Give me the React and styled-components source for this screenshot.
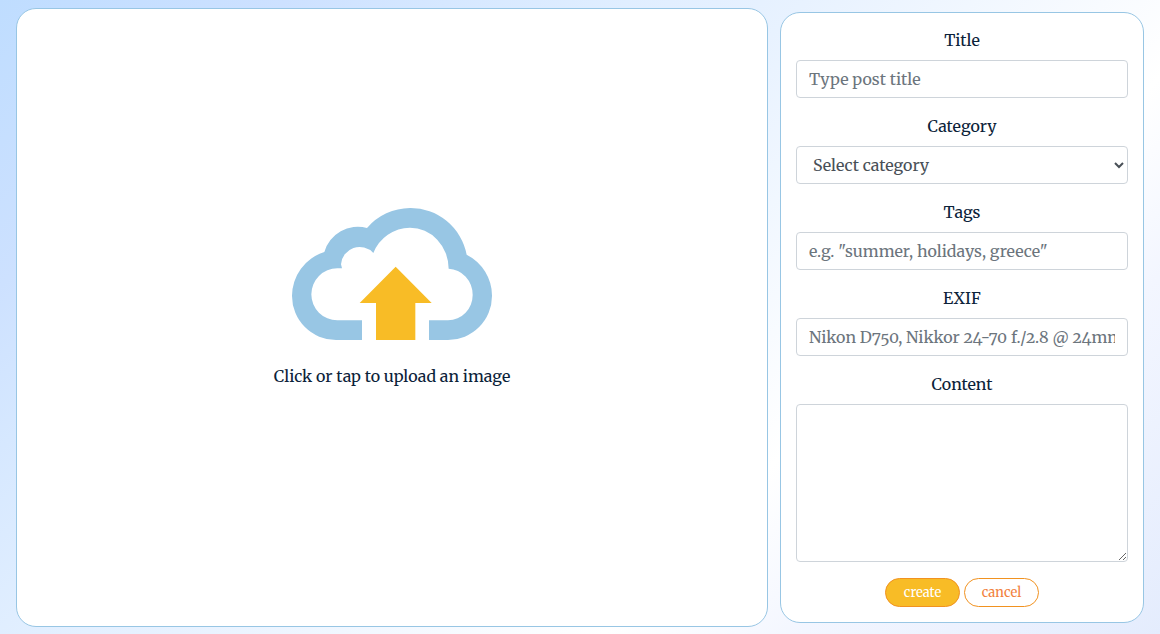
import React from "react";
import styled, { createGlobalStyle } from "styled-components";

const GlobalStyle = createGlobalStyle`
  *, *::before, *::after { box-sizing: border-box; }
  body {
    margin: 0;
    font-family: Merriweather, "DejaVu Serif Condensed", "DejaVu Serif", serif;
    font-size: 16px;
    font-weight: 400;
    font-variant-numeric: oldstyle-nums;
    line-height: 24px;
    color: #0b2239;
  }
`;

const Page = styled.main`
  display: flex;
  align-items: stretch;
  gap: 12px;
  min-height: 100vh;
  padding: 8px 16px 7px;
  background: linear-gradient(135deg, #bfddff 0%, #cde1ff 16%, #d6e8ff 25%, #e0eeff 35%, #e8f2ff 45%, #fff 69%, #f3f6ff 80%, #e4ecfd 100%);
`;

const Card = styled.section`
  background: #fff;
  border: 1px solid #98c6e4;
  border-radius: 20px;
`;

const UploadCard = styled(Card)`
  display: flex;
  flex: 1;
`;

const UploadButton = styled.button`
  display: flex;
  flex: 1;
  flex-direction: column;
  align-items: center;
  justify-content: center;
  gap: 24px;
  padding: 0 0 40px;
  border: 0;
  background: none;
  color: inherit;
  font: inherit;
  cursor: pointer;
`;

const CloudIcon = styled.svg`
  display: block;
  width: 200px;
  height: 132px;
`;

const FormCard = styled(Card)`
  width: calc(33.333% - 12px);
  margin: 4px 0;
  padding: 15px;
`;

const Form = styled.form`
  display: flex;
  flex-direction: column;
  gap: 16px;
`;

const FieldGroup = styled.div`
  display: flex;
  flex-direction: column;
  gap: 8px;
`;

const Label = styled.label`
  text-align: center;
`;

const Control = styled.input`
  display: block;
  width: 100%;
  height: ${(p) => (p.as === "textarea" ? "auto" : "38px")};
  padding: 6px 12px;
  border: 1px solid #ced4da;
  border-radius: 4px;
  background: #fff;
  color: #495057;
  font: inherit;

  &::placeholder {
    color: #6c757d;
    opacity: 1;
  }
`;

const Actions = styled.div`
  display: flex;
  justify-content: center;
  gap: 4px;
`;

const ActionButton = styled.button`
  width: 75px;
  height: 29px;
  padding: 0;
  border: 1px solid #f19220;
  border-radius: 16px;
  background: ${(p) => (p.$primary ? "#f8bc26" : "#fff")};
  color: ${(p) => (p.$primary ? "#fff" : "#f2813c")};
  font: inherit;
  font-size: 13px;
  line-height: 20px;
  cursor: pointer;
`;

function Field({ id, label, children, ...props }) {
  return (
    <FieldGroup>
      <Label htmlFor={id}>{label}</Label>
      <Control id={id} name={id} {...props}>{children}</Control>
    </FieldGroup>
  );
}

export default function App() {
  return (
    <>
      <GlobalStyle />
      <Page>
        <UploadCard>
          <UploadButton type="button">
            <CloudIcon viewBox="36 39 600 396" aria-hidden="true">
              <path
                fill="#98c6e4"
                d="M246 435H168A132 132 0 0 1 36 303A138 138 0 0 1 133 171A104 104 0 0 1 261 99A172 172 0 0 1 390 39A172 172 0 0 1 560 179A138 138 0 0 1 636 303A132 132 0 0 1 504 435H447V376H504A75 76 0 0 0 578 299A75 78 0 0 0 506 221A116 124 0 0 0 390 98A120 120 0 0 0 280 174A56 56 0 0 0 183 208L186 220H172A78 78 0 0 0 94 298A78 78 0 0 0 172 376H246Z"
              />
              <path fill="#f8bc26" d="M347 215L455 324H406V435H288V324H239Z" />
            </CloudIcon>
            <span>Click or tap to upload an image</span>
          </UploadButton>
        </UploadCard>
        <FormCard>
          <Form onSubmit={(e) => e.preventDefault()}>
            <Field id="title" label="Title" type="text" placeholder="Type post title" />
            <Field id="category" label="Category" as="select">
              <option>Select category</option>
            </Field>
            <Field id="tags" label="Tags" type="text" placeholder={'e.g. "summer, holidays, greece"'} />
            <Field id="exif" label="EXIF" type="text" placeholder="Nikon D750, Nikkor 24-70 f./2.8 @ 24mm" />
            <Field id="content" label="Content" as="textarea" rows={6} />
            <Actions>
              <ActionButton type="submit" $primary>create</ActionButton>
              <ActionButton type="button">cancel</ActionButton>
            </Actions>
          </Form>
        </FormCard>
      </Page>
    </>
  );
}
